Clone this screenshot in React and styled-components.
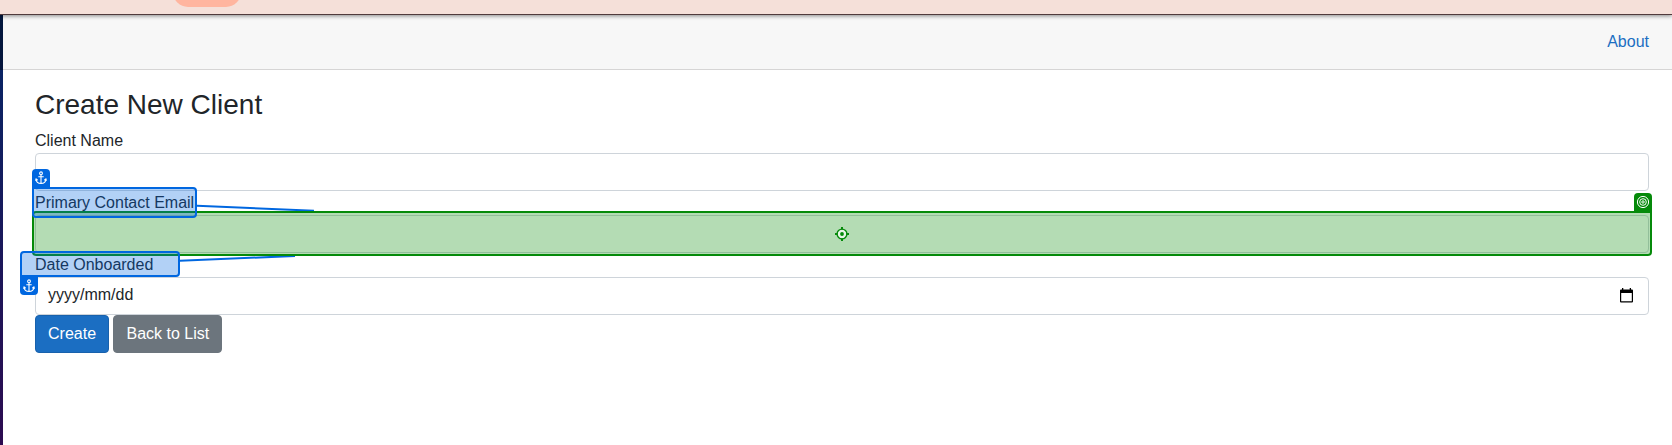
import React from "react";
import styled, { createGlobalStyle } from "styled-components";

const GlobalStyle = createGlobalStyle`
  *, *::before, *::after { box-sizing: border-box; }
  html, body { margin: 0; background: #fff; overflow: hidden; }
  body { font: 16px/1.5 "Liberation Sans", Arial, sans-serif; color: #212529; }
`;

const Screen = styled.div`
  position: relative;
  height: 445px;
  display: flex;
  flex-direction: column;
  overflow: hidden;
`;

const BrowserBar = styled.div`
  flex: none;
  height: 15px;
  padding-left: 173px;
  background: #f5e0d9;
  border-bottom: 1px solid #503a3c;
  box-shadow: 0 1px 4px rgba(0, 0, 0, 0.45);
  overflow: hidden;
  z-index: 1;
`;

const BrowserPill = styled.div`
  width: 68px;
  height: 30px;
  margin-top: -23px;
  border-radius: 15px;
  background: #ffb59f;
`;

const Page = styled.div`
  flex: 1;
  display: flex;
`;

const Sidebar = styled.aside`
  flex: none;
  width: 3px;
  background: linear-gradient(180deg, #052767 0, #2c0b50 430px);
`;

const SidebarTop = styled.div`
  height: 55px;
  background: rgba(0, 0, 0, 0.4);
`;

const Main = styled.main`
  flex: 1;
`;

const TopRow = styled.header`
  height: 55px;
  padding: 0 23px;
  display: flex;
  align-items: center;
  justify-content: flex-end;
  background: #f7f7f7;
  border-bottom: 1px solid #d6d5d5;
`;

const Link = styled.a`
  color: #1b6ec2;
  text-decoration: none;
`;

const Form = styled.form`
  display: flex;
  flex-direction: column;
  padding: 17.6px 23px 0 32px;
`;

const Title = styled.h3`
  margin: 0 0 8px;
  font-size: 28px;
  font-weight: 400;
  line-height: 1.2;
`;

const Label = styled.label`
  height: 24px;
`;

const Field = styled.div`
  height: 38px;
  padding: 5px 15px 7px 12px;
  display: flex;
  align-items: center;
  justify-content: space-between;
  background: #fff;
  border: 1px solid #ced4da;
  border-radius: 4px;
`;

const Actions = styled.div`
  display: flex;
  gap: 4.45px;
`;

const Button = styled.button`
  height: 38px;
  padding: 6px 12px;
  font: inherit;
  color: #fff;
  border: 1px solid ${(p) => (p.$primary ? "#1861ac" : "#6c757d")};
  border-radius: 4px;
  background: ${(p) => (p.$primary ? "#1b6ec2" : "#6c757d")};
`;

const Highlight = styled.div`
  position: absolute;
  left: ${(p) => p.$x}px;
  top: ${(p) => p.$y}px;
  width: ${(p) => p.$w}px;
  height: ${(p) => p.$h}px;
  display: flex;
  align-items: center;
  justify-content: center;
  z-index: 2;
  border: 2px solid ${(p) => p.$color};
  border-radius: ${(p) => p.$radius};
  background: ${(p) => p.$fill};
`;

const Badge = styled.span`
  position: absolute;
  ${(p) => p.$side}: -2px;
  ${(p) => (p.$below ? "top: 100%" : "bottom: 100%")};
  width: 18px;
  height: 20px;
  padding: ${(p) => (p.$below ? "1px 0 0" : "0 0 2px")};
  display: flex;
  align-items: center;
  justify-content: center;
  background: ${(p) => p.$color};
  border-radius: ${(p) => (p.$below ? "0 0 4px 4px" : "4px 4px 0 0")};
`;

const Connectors = styled.svg`
  position: absolute;
  left: 0;
  top: 0;
  z-index: 2;
`;

const BLUE = "#0067e0";
const GREEN = "#058a0a";
const BLUE_FILL = "rgba(0, 103, 224, 0.3)";
const GREEN_FILL = "rgba(5, 140, 5, 0.3)";

const AnchorIcon = () => (
  <svg width="12" height="14" viewBox="0 0 12 14" fill="none" stroke="#fff" strokeWidth="1.1">
    <circle cx="6" cy="2.3" r="1.4" />
    <path d="M6 3.7V12.4M3.3 5.7H8.7M1 8.2C1.2 11 3 12.4 6 12.4S10.8 11 11 8.2M.5 9.7L1.1 8L2.7 9.2M11.5 9.7L10.9 8L9.3 9.2" />
  </svg>
);

const TargetIcon = () => (
  <svg width="14" height="14" viewBox="0 0 14 14" fill="none" stroke="#fff">
    <circle cx="7" cy="7" r="5.6" />
    <circle cx="7" cy="7" r="3.3" />
    <circle cx="7" cy="7" r="1.2" />
  </svg>
);

const CrosshairIcon = () => (
  <svg width="14" height="14" viewBox="0 0 14 14" fill="none">
    <circle cx="7" cy="7" r="4.9" fill="#e8f5e8" stroke={GREEN} strokeWidth="1.4" />
    <circle cx="7" cy="7" r="1.9" fill={GREEN} />
    <path d="M7 0V2.5M7 11.5V14M0 7H2.5M11.5 7H14" stroke={GREEN} strokeWidth="2" />
  </svg>
);

const CalendarIcon = () => (
  <svg width="13" height="15" viewBox="0 0 13 15">
    <path fill="#000" fillRule="evenodd" d="M0 2.5Q0 1.5 1 1.5H2V0H3.3V1.5H9.7V0H11V1.5H12Q13 1.5 13 2.5V13.5Q13 14.5 12 14.5H1Q0 14.5 0 13.5ZM1.2 5V13.3H11.8V5Z" />
  </svg>
);

export default function App() {
  return (
    <Screen>
      <GlobalStyle />
      <BrowserBar>
        <BrowserPill />
      </BrowserBar>
      <Page>
        <Sidebar>
          <SidebarTop />
        </Sidebar>
        <Main>
          <TopRow>
            <Link>About</Link>
          </TopRow>
          <Form>
            <Title>Create New Client</Title>
            <Label>Client Name</Label>
            <Field />
            <Label>Primary Contact Email</Label>
            <Field />
            <Label>Date Onboarded</Label>
            <Field>
              <span>yyyy/mm/dd</span>
              <CalendarIcon />
            </Field>
            <Actions>
              <Button type="button" $primary>Create</Button>
              <Button type="button">Back to List</Button>
            </Actions>
          </Form>
        </Main>
      </Page>
      <Connectors width="340" height="300">
        <clipPath id="outside-target">
          <path d="M197 180H314V211H197ZM180 256H295V290H180Z" />
        </clipPath>
        <g clipPath="url(#outside-target)" stroke={BLUE} strokeWidth="2">
          <path d="M114.5 202L842 234" />
          <path d="M100 264L842 233.5" />
        </g>
      </Connectors>
      <Highlight $x={32} $y={211} $w={1620} $h={45} $color={GREEN} $fill={GREEN_FILL} $radius="4px 0 4px 4px">
        <CrosshairIcon />
        <Badge $side="right" $color={GREEN}>
          <TargetIcon />
        </Badge>
      </Highlight>
      <Highlight $x={32} $y={187} $w={165} $h={31} $color={BLUE} $fill={BLUE_FILL} $radius="0 4px 4px 4px">
        <Badge $side="left" $color={BLUE}>
          <AnchorIcon />
        </Badge>
      </Highlight>
      <Highlight $x={20} $y={251} $w={160} $h={26} $color={BLUE} $fill={BLUE_FILL} $radius="4px 4px 4px 0">
        <Badge $side="left" $color={BLUE} $below>
          <AnchorIcon />
        </Badge>
      </Highlight>
    </Screen>
  );
}
